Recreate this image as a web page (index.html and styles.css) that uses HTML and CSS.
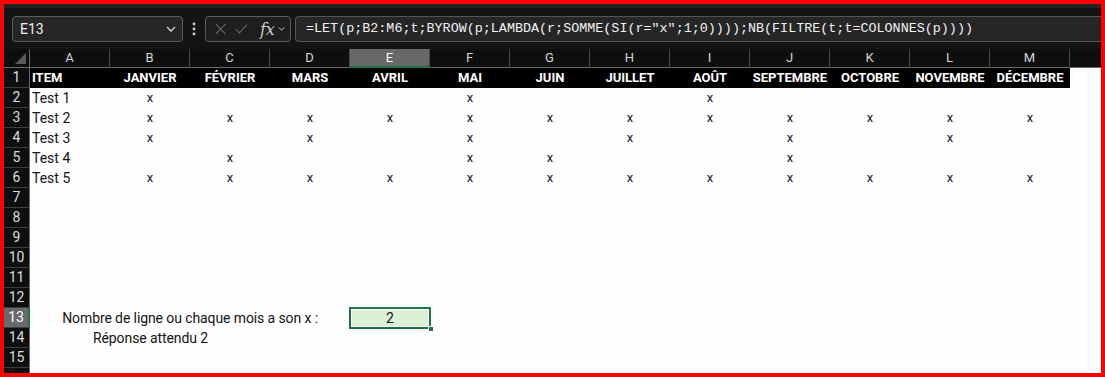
FILE: index.html
```html
<!DOCTYPE html>
<html lang="fr">
<head>
    <meta charset="UTF-8">
    <meta name="viewport" content="width=device-width, initial-scale=1.0">
    <title>Classeur - Feuil1</title>
    <link rel="stylesheet" href="styles.css">
</head>
<body>

<div class="frame">

    <!-- Barre de formule -->
    <div class="formula-bar">
        <div class="name-box">
            <span>E13</span>
            <svg class="chevron" width="10" height="6" viewBox="0 0 10 6"><path d="M1 1 L5 5 L9 1" fill="none" stroke="#d8d8d8" stroke-width="1.3"/></svg>
        </div>
        <svg class="dots" width="4" height="14" viewBox="0 0 4 14"><circle cx="2" cy="2" r="1.4" fill="#d0d0d0"/><circle cx="2" cy="7" r="1.4" fill="#d0d0d0"/><circle cx="2" cy="12" r="1.4" fill="#d0d0d0"/></svg>
        <div class="fx-box">
            <svg width="14" height="14" viewBox="0 0 14 14"><path d="M1 1 L13 13 M13 1 L1 13" stroke="#6a6a6a" stroke-width="1.3"/></svg>
            <svg width="16" height="14" viewBox="0 0 16 14"><path d="M1 7 L5.5 12 L15 1.5" fill="none" stroke="#6a6a6a" stroke-width="1.3"/></svg>
            <span class="fx">fx</span>
            <svg width="9" height="6" viewBox="0 0 9 6"><path d="M1 1 L4.5 4.5 L8 1" fill="none" stroke="#d0d0d0" stroke-width="1.2"/></svg>
        </div>
        <div class="formula-input">=LET(p;B2:M6;t;BYROW(p;LAMBDA(r;SOMME(SI(r="x";1;0))));NB(FILTRE(t;t=COLONNES(p))))</div>
    </div>

    <!-- Feuille -->
    <div class="sheet" id="sheet"></div>

</div>

<script>
    // Colonnes et mois
    const cols = ['A','B','C','D','E','F','G','H','I','J','K','L','M'];
    const months = ['JANVIER','FÉVRIER','MARS','AVRIL','MAI','JUIN','JUILLET','AOÛT','SEPTEMBRE','OCTOBRE','NOVEMBRE','DÉCEMBRE'];

    // Les mois cochés pour chaque ligne (index 0 = janvier)
    const tests = [
        { name: 'Test 1', x: [0, 4, 7] },
        { name: 'Test 2', x: [0,1,2,3,4,5,6,7,8,9,10,11] },
        { name: 'Test 3', x: [0, 2, 4, 6, 8, 10] },
        { name: 'Test 4', x: [1, 4, 5, 8] },
        { name: 'Test 5', x: [0,1,2,3,4,5,6,7,8,9,10,11] }
    ];

    const sheet = document.getElementById('sheet');

    function cell(cls, text) {
        const div = document.createElement('div');
        div.className = cls;
        if (text !== undefined) div.textContent = text;
        sheet.appendChild(div);
        return div;
    }

    // En-têtes de colonnes
    cell('corner');
    cols.forEach(c => cell(c === 'E' ? 'col-head active' : 'col-head', c));
    cell('col-head filler');

    // Ligne 1 : titres
    cell('row-head', '1');
    cell('cell title left', 'ITEM');
    months.forEach(m => cell('cell title', m));
    cell('cell');

    // Lignes 2 à 6
    tests.forEach((t, i) => {
        cell('row-head', String(i + 2));
        cell('cell left', t.name);
        months.forEach((m, j) => cell('cell mark', t.x.includes(j) ? 'x' : ''));
        cell('cell');
    });

    // Lignes 7 à 16 (la 16 est coupée par le bord, pas de numéro)
    for (let r = 7; r <= 16; r++) {
        cell(r === 13 ? 'row-head active' : 'row-head', r < 16 ? String(r) : '');
        if (r === 13) {
            cell('cell label-13', 'Nombre de ligne ou chaque mois a son x :');
            const sel = cell('cell selected', '2');
            sel.appendChild(document.createElement('span')).className = 'handle';
            for (let k = 0; k < 9; k++) cell('cell');
        } else if (r === 14) {
            cell('cell label-14', 'Réponse attendu 2');
            for (let k = 0; k < 11; k++) cell('cell');
        } else {
            for (let k = 0; k < 14; k++) cell('cell');
        }
    }
</script>

</body>
</html>
```

FILE: styles.css
```css
* {
    box-sizing: border-box;
}

body {
    margin: 0;
    background-color: #ff0000;
    font-family: Roboto, "Liberation Sans", sans-serif;
    overflow: hidden;
}

.frame {
    width: 1105px;
    height: 377px;
    border: 4px solid #ff0000;
    background-color: #fdfefd;
    overflow: hidden;
}

/* Barre de formule */

.formula-bar {
    height: 45px;
    background-color: #141414;
    border-top: 4px solid #222226;
    padding: 8px 0 0 8px;
    display: flex;
    align-items: flex-start;
}

.name-box {
    width: 171px;
    height: 26px;
    border: 1px solid #5c5c5c;
    border-radius: 4px;
    background-color: #262626;
    color: #f0f0f0;
    font-size: 14px;
    display: flex;
    align-items: center;
    justify-content: space-between;
    padding: 0 6px 0 7px;
}

.dots {
    margin: 6px 9px 0 9px;
}

.fx-box {
    width: 86px;
    height: 26px;
    border: 1px solid #5c5c5c;
    border-radius: 4px;
    background-color: #1e1e1e;
    display: flex;
    align-items: center;
    gap: 9px;
    padding: 0 5px 0 9px;
}

.fx-box .fx {
    font-family: "DejaVu Serif", "Liberation Serif", serif;
    font-style: italic;
    font-size: 16px;
    color: #cfcfcf;
    margin-left: 3px;
    margin-right: -6px;
}

.formula-input {
    flex: 1;
    height: 26px;
    margin-left: 4px;
    border-top: 1px solid #555;
    border-bottom: 1px solid #555;
    border-left: 1px solid #555;
    border-radius: 4px 0 0 4px;
    background-color: #262626;
    color: #f2f2f2;
    font-family: "Liberation Mono", "DejaVu Sans Mono", monospace;
    font-size: 13.4px;
    line-height: 24px;
    padding-left: 10px;
    white-space: nowrap;
}

/* Feuille */

.sheet {
    display: grid;
    grid-template-columns: 26px repeat(13, 80px) 1fr;
    grid-template-rows: 19px;
    grid-auto-rows: 20px;
}

.corner {
    background-color: #0e0e10;
    border-bottom: 1px solid #6a6a6a;
    border-right: 1px solid #6a6a6a;
    position: relative;
}

.corner::after {
    content: "";
    position: absolute;
    right: 3px;
    bottom: 3px;
    border-left: 11px solid transparent;
    border-bottom: 11px solid #5a5a5a;
}

.col-head {
    background-color: #0e0e10;
    color: #d4d4d4;
    font-size: 13px;
    text-align: center;
    line-height: 18px;
    border-right: 1px solid #4a4a4a;
    border-bottom: 1px solid #6a6a6a;
}

.col-head.active {
    background-color: #686868;
    color: #fff;
    border-bottom: 2px solid #217346;
}

.col-head.filler {
    border-right: none;
}

.row-head {
    background-color: #0e0e10;
    color: #dcdcdc;
    font-size: 14px;
    text-align: center;
    line-height: 19px;
    border-right: 1px solid #6a6a6a;
    border-bottom: 1px solid #3e3e3e;
}

.row-head.active {
    background-color: #6a6a6a;
    color: #fff;
    border-right: 2px solid #217346;
}

.cell {
    font-size: 14px;
    color: #141414;
    line-height: 20px;
    text-align: center;
    white-space: nowrap;
}

.cell.left {
    text-align: left;
    padding-left: 2px;
}

.cell.title {
    background-color: #000;
    color: #fff;
    font-weight: bold;
    font-size: 13px;
}

.cell.mark {
    font-size: 13px;
}

.label-13 {
    grid-column: span 4;
    text-align: right;
    padding-right: 32px;
    letter-spacing: -0.1px;
}

.label-14 {
    grid-column: span 3;
    text-align: left;
    padding-left: 63px;
    letter-spacing: -0.1px;
}

.selected {
    position: relative;
    background-color: #dcf0d6;
    box-shadow: inset 0 0 0 2px #fdfefd;
    outline: 2px solid #217346;
    outline-offset: -1px;
}

.handle {
    position: absolute;
    right: -4px;
    bottom: -4px;
    width: 6px;
    height: 6px;
    background-color: #217346;
    border: 1px solid #fff;
}
```
